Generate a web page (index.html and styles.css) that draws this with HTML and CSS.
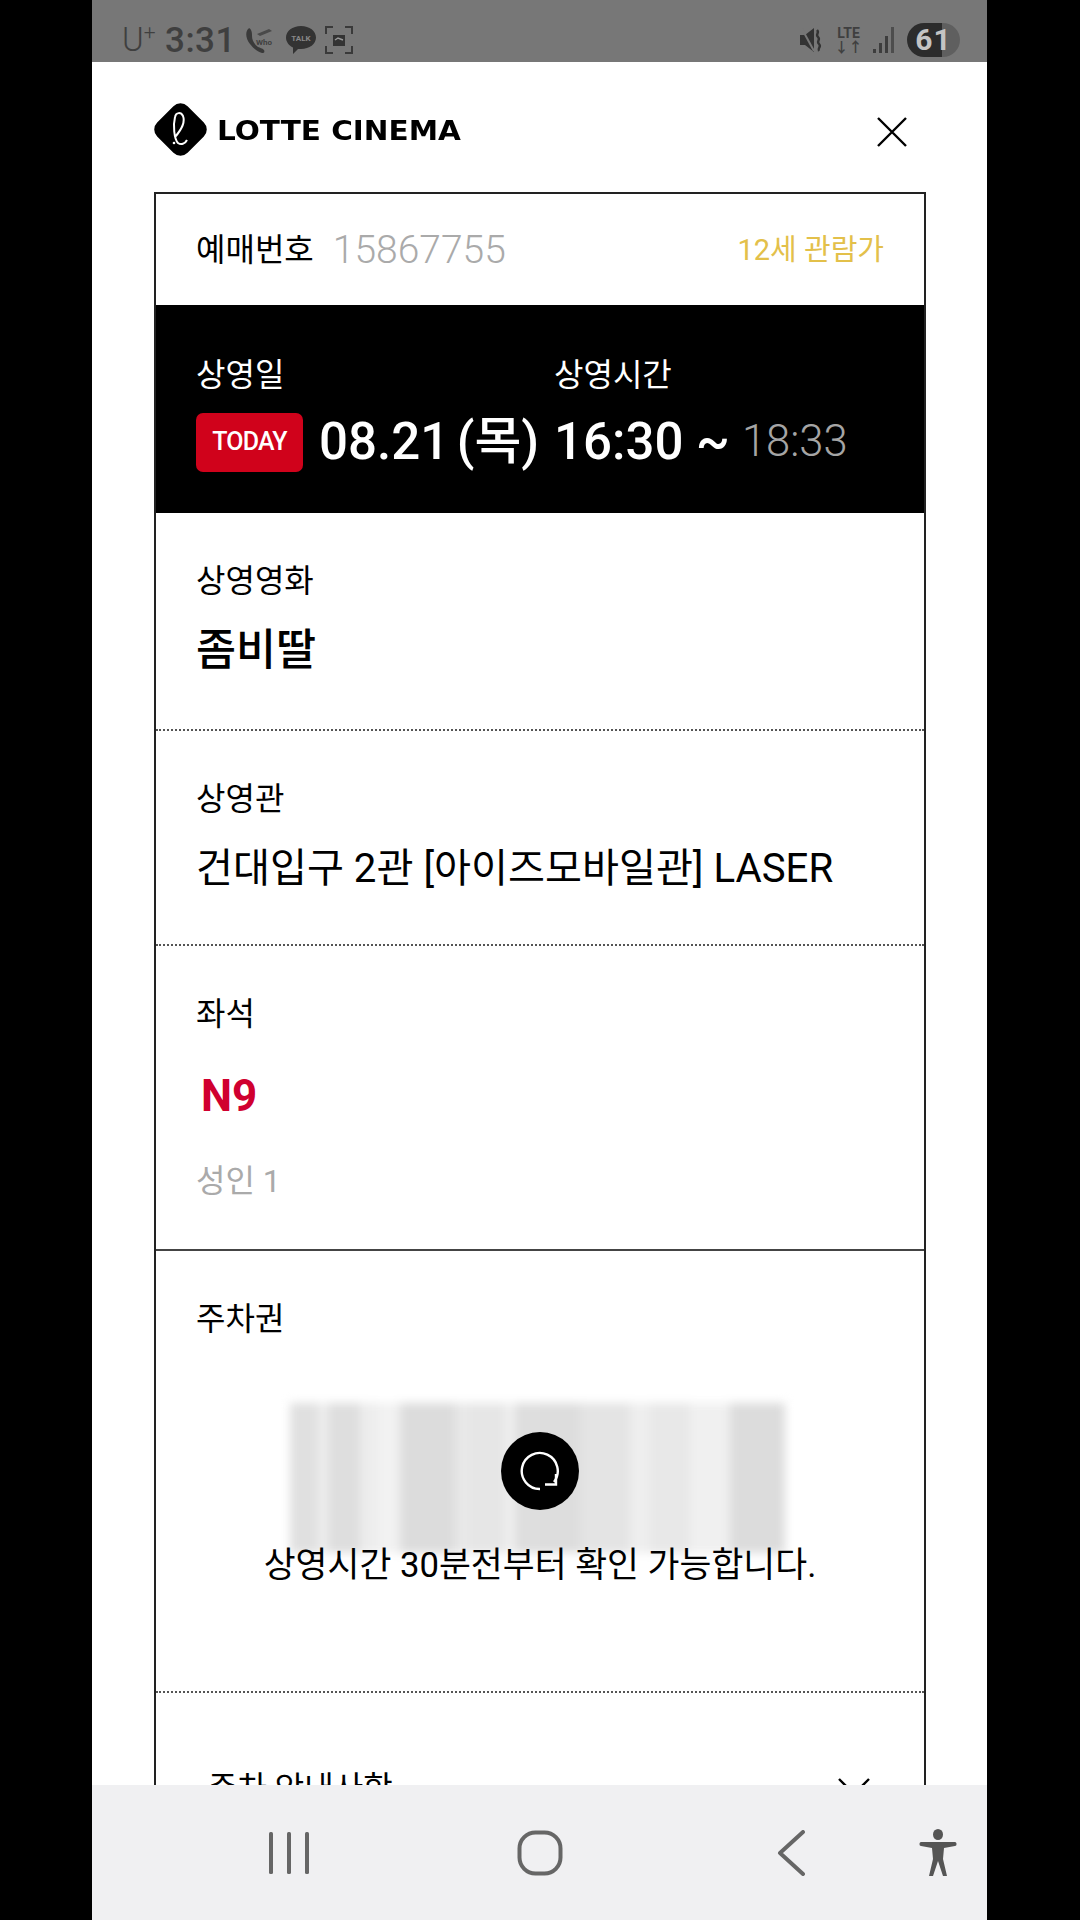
FILE: index.html
```html
<!DOCTYPE html>
<html lang="ko">
<head>
  <meta charset="UTF-8">
  <meta name="viewport" content="width=device-width, initial-scale=1.0">
  <title>Lotte Cinema Ticket</title>
  <link rel="stylesheet" href="styles.css">
</head>
<body>
  <div class="phone">
    <div class="status-bar">
      <div class="status-left">
        <span class="carrier">U<sup>+</sup></span>
        <span class="clock">3:31</span>
        <svg class="st-phone" width="32" height="28" viewBox="0 0 32 28"><path d="M3 3c-3 4-2 10 2 15s8 8 12 9c2 0 3-1 2-3-2-2-4-2-6-3-4-3-6-7-6-11 0-2 0-4-1-6-1-2-2-2-3-1z" fill="#3a3a3a"/><path d="M12 8l12-5 3 2-12 5z" fill="#4a4a4a"/><text x="11" y="19" class="who">Who</text></svg>
        <svg class="st-talk" width="32" height="30" viewBox="0 0 32 30"><path d="M16 1c8.500 0 15 5 15 11.500S24.500 24 16 24h-3l-5 5 0-6.500C4 20.500 1 17 1 12.500 1 6 7.500 1 16 1z" fill="#333"/><text x="16" y="16" class="talk">TALK</text></svg>
        <svg class="st-shot" width="28" height="28" viewBox="0 0 28 28" fill="none" stroke="#3a3a3a" stroke-width="2"><path d="M1 8V1h7M20 1h7v7M27 20v7h-7M8 27H1v-7"/><rect x="8" y="9" width="12" height="11" fill="#333" stroke="none"/><path d="M10 14l3-2 5 2" stroke="#999" stroke-width="1.500"/></svg>
      </div>
      <div class="status-right">
        <svg width="25" height="26" viewBox="0 0 25 26"><path d="M1 8h5l9-7v24l-9-7H1z" fill="#333"/><path d="M3 2l12 22" stroke="#777" stroke-width="2"/><path d="M18 3c3 3-2 4 1 7s-2 4 1 7-2 4 0 7" stroke="#333" stroke-width="2.400" fill="none"/></svg>
        <span class="lte">LTE<br><i>↓↑</i></span>
        <svg width="22" height="28" viewBox="0 0 22 28" fill="#3d3d3d"><rect x="0" y="23" width="3" height="4"/><rect x="6" y="17" width="3" height="10"/><rect x="12" y="10" width="3" height="17"/><rect x="18" y="1" width="3" height="26" fill="#4d4d4d"/></svg>
        <span class="battery">61</span>
      </div>
    </div>

    <div class="content">
      <header class="top">
        <div class="logo">
          <svg width="53" height="53" viewBox="0 0 53 53"><rect x="5" y="5" width="43" height="43" rx="10" transform="rotate(45 26.500 26.500)" fill="#000"/><path d="M21 34C28 26 31 18 29 13 27 9 22 9 21 14 19 22 20 36 24 40 27 42 31 41 33 37" fill="none" stroke="#fff" stroke-width="2"/><circle cx="20" cy="40" r="1.300" fill="#fff"/></svg>
          <span class="logo-text">LOTTE CINEMA</span>
        </div>
        <svg class="close" width="32" height="32" viewBox="0 0 32 32"><path d="M2 2l28 28M30 2L2 30" stroke="#000" stroke-width="2.400" fill="none"/></svg>
      </header>

      <section class="ticket">
        <div class="row-number">
          <span class="label">예매번호</span>
          <span class="number">15867755</span>
          <span class="age">12세 관람가</span>
        </div>

        <div class="row-when">
          <div class="col-date">
            <div class="label">상영일</div>
            <div class="when-line">
              <span class="today">TODAY</span>
              <span class="big date">08.21 (목)</span>
            </div>
          </div>
          <div class="col-time">
            <div class="label">상영시간</div>
            <div class="when-line">
              <span class="big">16:30 ~</span>
              <span class="end">18:33</span>
            </div>
          </div>
        </div>

        <div class="block block-movie dotted">
          <div class="label">상영영화</div>
          <div class="movie">좀비딸</div>
        </div>

        <div class="block block-hall dotted">
          <div class="label">상영관</div>
          <div class="hall">건대입구 2관 [아이즈모바일관] LASER</div>
        </div>

        <div class="block block-seat solid">
          <div class="label">좌석</div>
          <div class="seat">N9</div>
          <div class="people">성인 1</div>
        </div>

        <div class="block block-parking dotted">
          <div class="label">주차권</div>
          <div class="barcode-wrap">
            <div class="barcode"></div>
            <div class="refresh">
              <svg width="42" height="42" viewBox="0 0 42 42" fill="none" stroke="#fff" stroke-width="2.400"><path d="M21 39A18 18 0 1 1 35 32"/><path d="M26 34.500h11V24"/></svg>
            </div>
            <p class="notice">상영시간 30분전부터 확인 가능합니다.</p>
          </div>
        </div>

        <div class="block-info">
          <span class="info-title">주차 안내사항</span>
          <svg class="chevron" width="34" height="20" viewBox="0 0 34 20"><path d="M2 2l15 15L32 2" stroke="#000" stroke-width="2.400" fill="none"/></svg>
        </div>
      </section>
    </div>

    <nav class="nav-bar">
      <svg class="nav-recent" width="44" height="44" viewBox="0 0 44 44" fill="#666"><rect x="2" y="1" width="4" height="42" rx="1.500"/><rect x="20" y="1" width="4" height="42" rx="1.500"/><rect x="38" y="1" width="4" height="42" rx="1.500"/></svg>
      <svg class="nav-home" width="46" height="46" viewBox="0 0 46 46"><rect x="2.500" y="2.500" width="41" height="41" rx="16" fill="none" stroke="#666" stroke-width="4"/></svg>
      <svg class="nav-back" width="30" height="46" viewBox="0 0 30 46"><path d="M27 2L4 23l23 21" fill="none" stroke="#666" stroke-width="4" stroke-linecap="round" stroke-linejoin="round"/></svg>
      <svg class="nav-access" width="38" height="48" viewBox="0 0 38 48" fill="#555"><ellipse cx="19" cy="5.500" rx="5" ry="5.500"/><path d="M2 13h34c2 0 2 4 0 4l-11 2-1 11 4 17h-4l-5-15-5 15h-4l4-17-1-11-11-2c-2 0-2-4 0-4z"/></svg>
    </nav>
  </div>
</body>
</html>
```

FILE: styles.css
```css
* {
  box-sizing: border-box;
}
html, body {
  margin: 0;
  padding: 0;
  background: #000;
}
body {
  width: 1080px;
  height: 1920px;
  overflow: hidden;
  font-family: Roboto, "Noto Sans CJK KR", sans-serif;
  color: #000;
}
.phone {
  width: 895px;
  height: 1920px;
  margin-left: 92px;
  display: flex;
  flex-direction: column;
  background: #fff;
}

/* status bar */
.status-bar {
  height: 62px;
  flex: none;
  background: #777;
  display: flex;
  justify-content: space-between;
  align-items: center;
  padding: 18px 27px 0 30px;
  color: #3f3f3f;
}
.status-left, .status-right {
  display: flex;
  align-items: center;
}
.carrier {
  width: 43px;
  font-size: 33px;
  font-weight: 300;
  line-height: 40px;
  white-space: nowrap;
}
.carrier sup {
  font-size: 21px;
  line-height: 0;
}
.clock {
  width: 80px;
  font-size: 35px;
  font-weight: 500;
  letter-spacing: 0.5px;
}
.who {
  font-size: 8px;
  font-weight: 700;
  fill: #3f3f3f;
}
.st-talk, .st-shot {
  margin-left: 8px;
}
.talk {
  font-size: 8px;
  font-weight: 700;
  fill: #888;
  text-anchor: middle;
}
.status-right {
  gap: 10px;
}
.lte {
  width: 29px;
  font-size: 14px;
  font-weight: 700;
  line-height: 14px;
  text-align: center;
}
.lte i {
  font-style: normal;
}
.battery {
  width: 53px;
  height: 34px;
  margin-left: 2px;
  border-radius: 17px;
  background: linear-gradient(90deg, #2c2c2c 0 66%, #5f5f5f 66%);
  color: #c4c4c4;
  font-size: 30px;
  font-weight: 700;
  letter-spacing: 1px;
  text-align: center;
  line-height: 34px;
}

/* scrolling content */
.content {
  flex: 1;
  min-height: 0;
  overflow: hidden;
  padding: 0 62px;
}
.top {
  height: 130px;
  display: flex;
  justify-content: space-between;
  align-items: center;
  padding: 5px 17px 0 0;
}
.logo {
  display: flex;
  align-items: center;
  gap: 10px;
}
.logo-text {
  font-family: "DejaVu Sans", sans-serif;
  font-size: 26px;
  font-weight: 700;
  margin-top: 2px;
  transform: scaleX(1.135);
  transform-origin: left center;
}
.close {
  margin-top: 4px;
}

.ticket {
  width: 772px;
  border: 2px solid #222;
  border-bottom: 0;
}
.label {
  font-size: 32px;
  line-height: 44px;
}
.row-number {
  height: 111px;
  display: flex;
  align-items: center;
  padding: 0 40px;
}
.number {
  margin-left: 19px;
  font-size: 39px;
  font-weight: 300;
  color: #aaa;
}
.age {
  margin-left: auto;
  padding-bottom: 6px;
  font-size: 29px;
  color: #e3c04a;
}

.row-when {
  height: 208px;
  background: #000;
  color: #fff;
  display: flex;
  padding: 48px 40px 0;
}
.col-date {
  width: 358px;
}
.when-line {
  display: flex;
  align-items: center;
  height: 60px;
  margin-top: 15px;
}
.today {
  width: 107px;
  height: 59px;
  background: #d0021b;
  border-radius: 7px;
  font-size: 25px;
  font-weight: 500;
  letter-spacing: -0.8px;
  line-height: 57px;
  text-align: center;
  margin-right: 16px;
}
.big {
  font-size: 51px;
  font-weight: 500;
  line-height: 60px;
  white-space: nowrap;
}
.date {
  word-spacing: -5px;
}
.end {
  margin-left: 12px;
  font-size: 43.500px;
  line-height: 60px;
  font-weight: 300;
  color: #a5a5a5;
}

.block {
  padding: 0 40px;
}
.dotted {
  border-bottom: 2px dotted #555;
}
.solid {
  border-bottom: 2px solid #444;
}
.block-movie {
  height: 218px;
  padding-top: 46px;
}
.movie {
  margin-top: 18px;
  font-size: 43.500px;
  font-weight: 500;
  line-height: 60px;
}
.block-hall {
  height: 215px;
  padding-top: 46px;
}
.hall {
  margin-top: 21px;
  font-size: 40.200px;
  line-height: 54px;
  white-space: nowrap;
}
.block-seat {
  height: 305px;
  padding-top: 46px;
}
.seat {
  margin-top: 32px;
  padding-left: 5px;
  font-size: 44px;
  font-weight: 700;
  line-height: 56px;
  color: #d0002f;
}
.people {
  margin-top: 35px;
  font-size: 32px;
  line-height: 44px;
  color: #aaa;
}
.block-parking {
  height: 442px;
  padding-top: 46px;
}
.barcode-wrap {
  position: relative;
  margin-top: 62px;
  height: 180px;
}
.barcode {
  width: 495px;
  height: 150px;
  margin-left: 94px;
  filter: blur(5px);
  background: linear-gradient(90deg,
    #e0e0e0 0 28px, #eee 28px 38px, #dedede 38px 70px, #ededed 70px 88px,
    #f2f2f2 88px 110px, #dcdcdc 110px 165px, #e8e8e8 165px 180px, #e6e6e6 180px 215px,
    #f0f0f0 215px 225px, #dedede 225px 250px, #ddd 250px 290px, #e4e4e4 290px 340px,
    #eee 340px 360px, #e8e8e8 360px 400px, #f0f0f0 400px 440px, #dcdcdc 440px 495px);
}
.refresh {
  position: absolute;
  left: 305px;
  top: 29px;
  width: 78px;
  height: 78px;
  border-radius: 50%;
  background: #000;
  display: flex;
  align-items: center;
  justify-content: center;
}
.notice {
  position: absolute;
  left: -20px;
  right: -20px;
  top: 139px;
  margin: 0;
  font-size: 34.700px;
  line-height: 46px;
  text-align: center;
  white-space: nowrap;
}
.block-info {
  display: flex;
  justify-content: space-between;
  align-items: center;
  padding: 69px 53px 60px 52px;
}
.info-title {
  font-size: 32px;
}
.chevron {
  margin-top: 4px;
}

/* android nav */
.nav-bar {
  height: 135px;
  flex: none;
  background: #f0f0f2;
  display: flex;
  align-items: center;
  padding: 0 0 0 175px;
}
.nav-home {
  margin-left: 206px;
}
.nav-back {
  margin-left: 213px;
}
.nav-access {
  margin-left: 113px;
}
```
